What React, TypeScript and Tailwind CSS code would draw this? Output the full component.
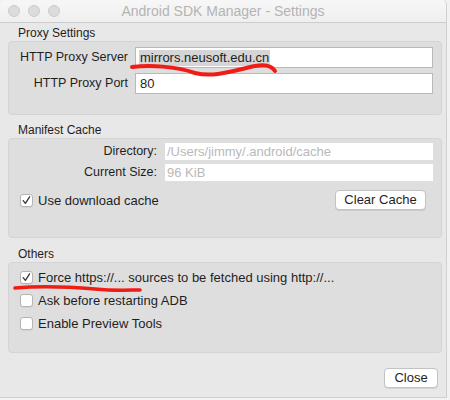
import React from "react";

const font = { fontFamily: '"Liberation Sans", Arial, sans-serif' };

function Check({ checked, label }: { checked?: boolean; label: string }) {
  return (
    <div className="flex items-center h-[18px]">
      <div className="w-[13px] h-[13px] bg-white border border-[#b4b4b4] rounded-[3px] flex items-center justify-center shadow-[0_1px_0_rgba(0,0,0,0.05)]">
        {checked && (
          <svg width="11" height="11" viewBox="0 0 11 11">
            <path d="M2.2 5.6 L4.4 8.4 L8.6 1.8" fill="none" stroke="#3a3a3a" strokeWidth="1.3" strokeLinecap="round" strokeLinejoin="round" />
          </svg>
        )}
      </div>
      <span className="ml-[5px] text-[13px] text-[#1e1e1e] leading-none">{label}</span>
    </div>
  );
}

function MacButton({ children, className }: { children: React.ReactNode; className?: string }) {
  return (
    <div
      className={
        "h-[20px] bg-white border border-[#c2c2c2] rounded-[4px] flex items-center justify-center text-[13px] text-[#1e1e1e] shadow-[0_1px_0_rgba(0,0,0,0.08)] " +
        (className ?? "")
      }
    >
      {children}
    </div>
  );
}

function GroupTitle({ children }: { children: React.ReactNode }) {
  return <div className="h-[15px] pl-[10px] text-[12px] leading-[15px] text-[#1e1e1e]">{children}</div>;
}

export default function App() {
  return (
    <div className="w-[450px] h-[400px] bg-[#f2f2f2]" style={font}>
      <div className="relative w-[447px] h-[398px] bg-[#e8e8e8] rounded-t-[5px] border-r border-b border-[#d0d0d0] flex flex-col overflow-hidden">
        {/* title bar */}
        <div className="h-[23px] shrink-0 bg-gradient-to-b from-[#f7f7f7] to-[#efefef] border-b border-[#cdcdcd] flex items-center relative">
          <div className="flex gap-[8px] pl-[8px]">
            <div className="w-[12px] h-[12px] rounded-full bg-[#dcdcdc] border border-[#cacaca]" />
            <div className="w-[12px] h-[12px] rounded-full bg-[#dcdcdc] border border-[#cacaca]" />
            <div className="w-[12px] h-[12px] rounded-full bg-[#dcdcdc] border border-[#cacaca]" />
          </div>
          <div className="absolute inset-0 flex items-center justify-center text-[14px] text-[#b4b4b4] pointer-events-none">
            Android SDK Manager - Settings
          </div>
        </div>

        <div className="flex flex-col pl-[8px] pr-[4px] pt-[3px]">
          {/* Proxy settings */}
          <GroupTitle>Proxy Settings</GroupTitle>
          <div className="h-[74px] bg-[#dedede] border border-[#d4d4d4] rounded-[4px] pt-[5px]">
            <div className="grid grid-cols-[119px_298px] gap-x-[7px] gap-y-[5px] items-center">
              <div className="text-right text-[12.5px] leading-[21px] text-[#1e1e1e]">HTTP Proxy Server</div>
              <div className="h-[21px] bg-white border border-[#b9b9b9] flex items-center pl-[3px] text-[13px] text-[#1e1e1e]">
                <span className="bg-[#d5d5d5] h-[16px] leading-[16px] px-[1px]">mirrors.neusoft.edu.cn</span>
              </div>
              <div className="text-right text-[12.5px] leading-[21px] text-[#1e1e1e]">HTTP Proxy Port</div>
              <div className="h-[21px] bg-white border border-[#b9b9b9] flex items-center pl-[4px] text-[13px] text-[#1e1e1e]">80</div>
            </div>
          </div>

          {/* Manifest cache */}
          <div className="mt-[8px]">
            <GroupTitle>Manifest Cache</GroupTitle>
          </div>
          <div className="h-[100px] bg-[#dedede] border border-[#d4d4d4] rounded-[4px] pt-[4px]">
            <div className="grid grid-cols-[148px_268px] gap-x-[8px] gap-y-[4px] items-center">
              <div className="text-right text-[12.5px] leading-[17px] text-[#1e1e1e]">Directory:</div>
              <div className="h-[17px] bg-white flex items-center pl-[2px] text-[13px] leading-[17px] text-[#b9b9b9]">/Users/jimmy/.android/cache</div>
              <div className="text-right text-[12.5px] leading-[17px] text-[#1e1e1e]">Current Size:</div>
              <div className="h-[17px] bg-white flex items-center pl-[2px] text-[13px] leading-[17px] text-[#b9b9b9]">96 KiB</div>
            </div>
            <div className="mt-[9px] flex items-center justify-between pl-[11px] pr-[15px]">
              <Check checked label="Use download cache" />
              <MacButton className="w-[91px]">Clear Cache</MacButton>
            </div>
          </div>

          {/* Others */}
          <div className="mt-[9px]">
            <GroupTitle>Others</GroupTitle>
          </div>
          <div className="h-[91px] bg-[#dedede] border border-[#d4d4d4] rounded-[4px] pt-[5px] pl-[11px] flex flex-col gap-[5px]">
            <Check checked label="Force https://... sources to be fetched using http://..." />
            <Check label="Ask before restarting ADB" />
            <Check label="Enable Preview Tools" />
          </div>

          <div className="mt-[15px] flex justify-end pr-[4px]">
            <MacButton className="w-[54px]">Close</MacButton>
          </div>
        </div>

        {/* red marker annotations */}
        <svg className="absolute inset-0 pointer-events-none" width="447" height="398" viewBox="0 0 447 398">
          <path
            d="M132 67 C 150 65, 175 66, 195 73 C 215 78, 235 70, 255 66 C 265 64, 272 66, 275 71"
            fill="none"
            stroke="#f01c16"
            strokeWidth="4"
            strokeLinecap="round"
          />
          <path
            d="M15 288 C 40 286, 70 287, 95 289 C 115 291, 130 290, 140 290"
            fill="none"
            stroke="#f01c16"
            strokeWidth="3.5"
            strokeLinecap="round"
          />
        </svg>
      </div>
    </div>
  );
}
